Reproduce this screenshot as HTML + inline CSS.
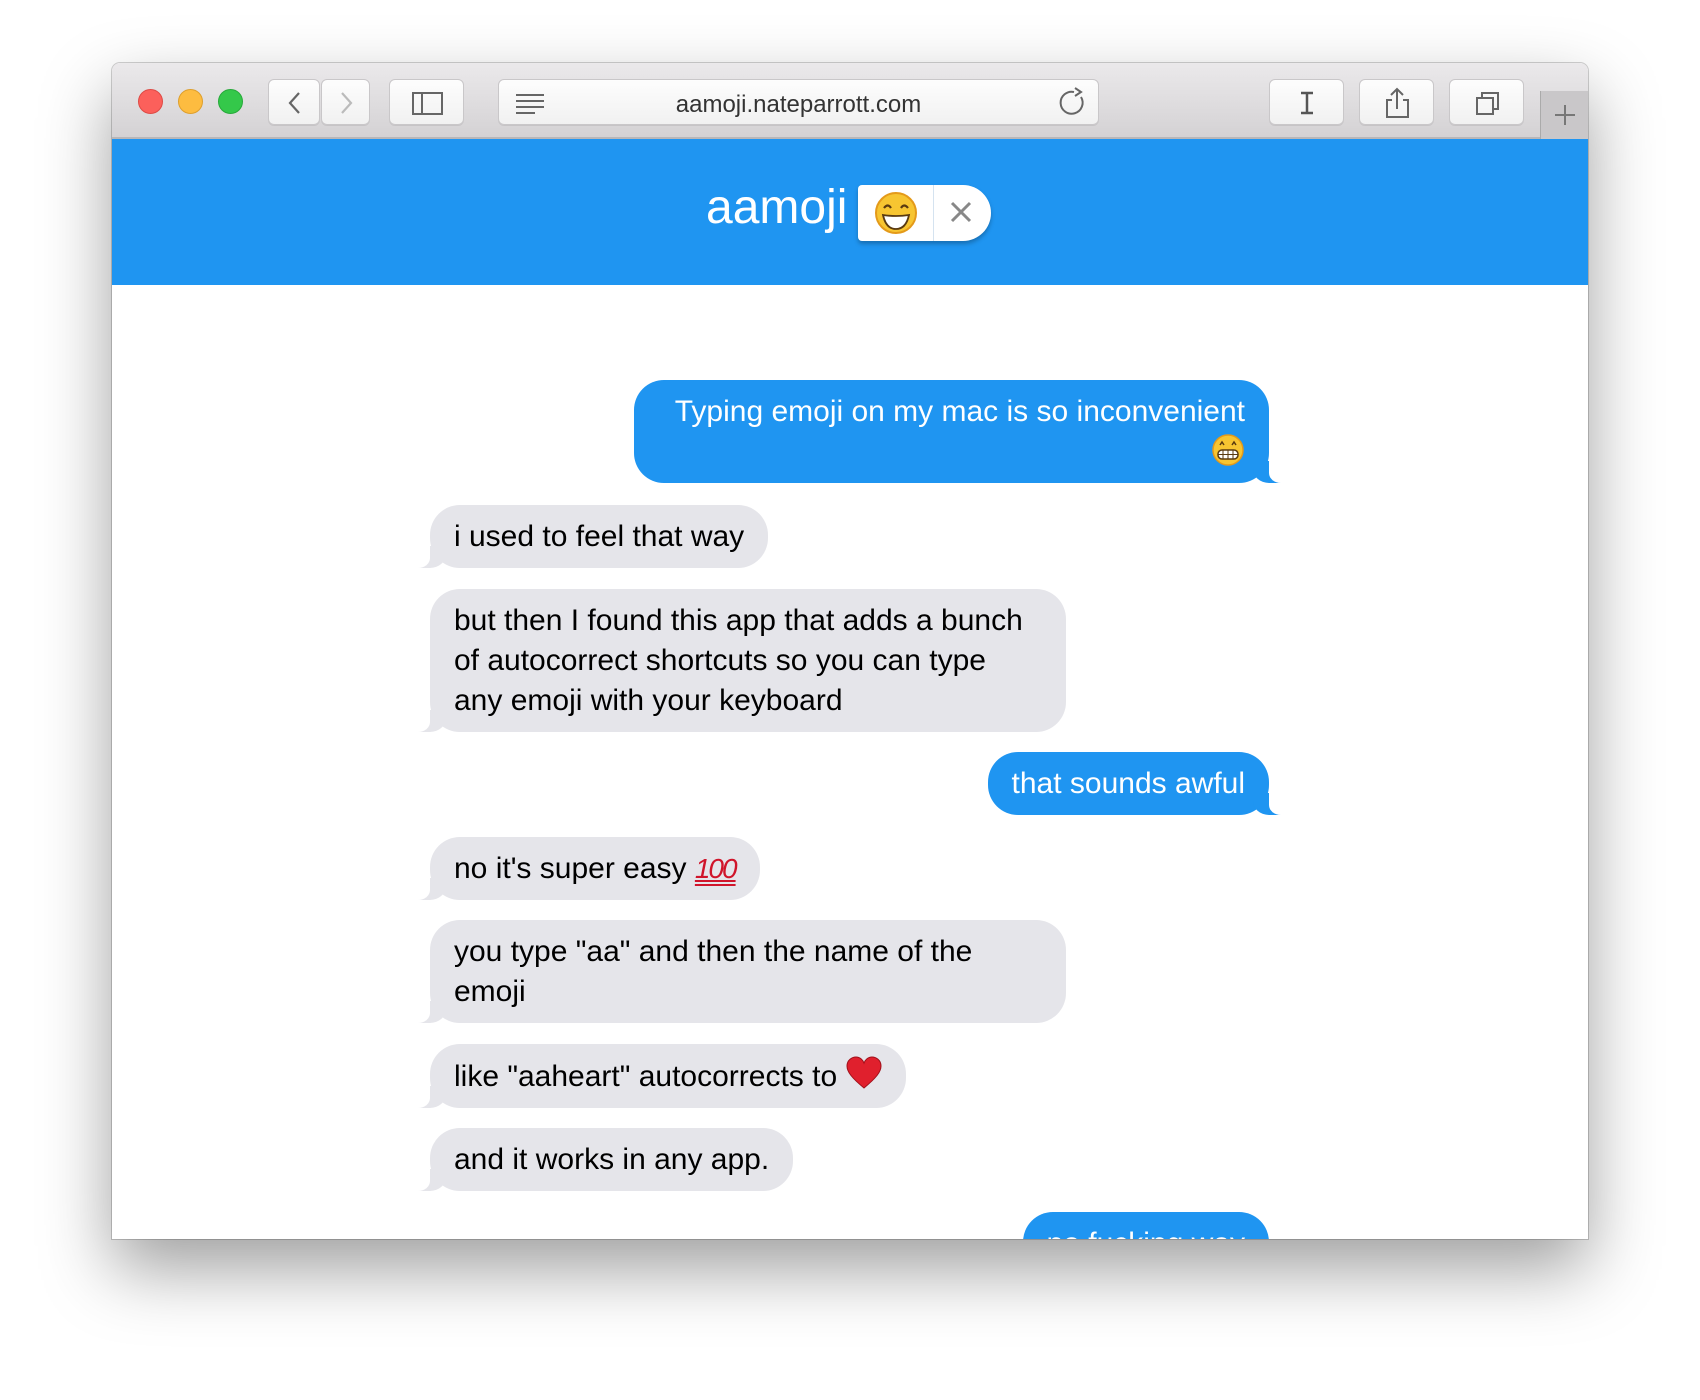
<!DOCTYPE html>
<html><head><meta charset="utf-8"><style>
*{box-sizing:border-box;margin:0;padding:0}
body{width:1700px;height:1400px;background:#fff;font-family:"Liberation Sans",sans-serif;position:relative;overflow:hidden}
.win{position:absolute;left:112px;top:63px;width:1476px;height:1176px;border-radius:8px 8px 0 0;overflow:hidden;box-shadow:0 30px 70px rgba(0,0,0,.38),0 0 0 1px rgba(0,0,0,.18);background:#fff}
.tb{position:absolute;left:0;top:0;width:100%;height:76px;background:linear-gradient(#ebe9eb,#d4d2d4);border-bottom:2px solid #b8b6b8}
.l{position:absolute;top:26px;width:25px;height:25px;border-radius:50%}
.btn{position:absolute;top:16px;height:46px;background:linear-gradient(#fdfdfd,#f1f1f1);border:1px solid #c9c7c9;border-radius:6px;box-shadow:0 1px 0 rgba(0,0,0,.08)}
.hdr{position:absolute;left:0;top:76px;width:100%;height:146px;background:#1f95f1}
.b{position:absolute;font-size:30px;line-height:40px;padding:12px 24px 11px;border-radius:30px}
.g{background:#e5e5ea;color:#000;left:318px}
.u{background:#1f95f1;color:#fff;text-align:right;right:319px}
.g:before{content:"";position:absolute;left:-16px;bottom:0;width:32px;height:22px;background:#e5e5ea;border-bottom-right-radius:16px 14px}
.g:after{content:"";position:absolute;left:-24px;bottom:0;width:24px;height:24px;background:#fff;border-bottom-right-radius:12px 10px}
.u:before{content:"";position:absolute;right:-16px;bottom:0;width:32px;height:22px;background:#1f95f1;border-bottom-left-radius:16px 14px}
.u:after{content:"";position:absolute;right:-24px;bottom:0;width:24px;height:24px;background:#fff;border-bottom-left-radius:12px 10px}
</style></head><body>
<div class="win">
 <div class="tb">
  <div class="l" style="left:26px;background:#fc605b;border:1px solid #de4a45"></div>
  <div class="l" style="left:66px;background:#fdbc40;border:1px solid #de9f2c"></div>
  <div class="l" style="left:106px;background:#34c84a;border:1px solid #27a93a"></div>
  <div class="btn" style="left:156px;width:52px"><svg width="52" height="46"><path d="M30 13 L21 23 L30 33" fill="none" stroke="#666" stroke-width="2.2"/></svg></div>
  <div class="btn" style="left:209px;width:49px"><svg width="49" height="46"><path d="M20 13 L29 23 L20 33" fill="none" stroke="#bbb" stroke-width="2.2"/></svg></div>
  <div class="btn" style="left:277px;width:75px"><svg width="75" height="46"><rect x="23" y="13" width="29" height="21" fill="none" stroke="#666" stroke-width="2"/><line x1="32" y1="13" x2="32" y2="34" stroke="#666" stroke-width="2"/></svg></div>
  <div class="btn" style="left:386px;width:601px"><svg width="60" height="46" style="position:absolute;left:0;top:0"><g stroke="#666" stroke-width="2"><line x1="17" y1="15" x2="45" y2="15"/><line x1="17" y1="21" x2="45" y2="21"/><line x1="17" y1="27" x2="45" y2="27"/><line x1="17" y1="33" x2="36" y2="33"/></g></svg>
   <div style="position:absolute;left:0;right:0;top:11px;text-align:center;font-size:24px;color:#333">aamoji.nateparrott.com</div>
   <svg width="40" height="46" style="position:absolute;right:6px;top:0"><path d="M22 12 A11 11 0 1 0 29 17" fill="none" stroke="#666" stroke-width="2"/><path d="M23 8 L29 12 L23 16" fill="none" stroke="#666" stroke-width="2"/></svg></div>
  <div class="btn" style="left:1157px;width:75px"><svg width="75" height="46"><path d="M31 13 H43 M37 13 V33 M31 33 H43" stroke="#555" stroke-width="2.5" fill="none"/></svg></div>
  <div class="btn" style="left:1247px;width:75px"><svg width="75" height="46"><path d="M32 20 H27 V37 H48 V20 H43 M37 29 V9 M31 15 L37 9 L43 15" stroke="#666" stroke-width="2" fill="none"/></svg></div>
  <div class="btn" style="left:1337px;width:75px"><svg width="75" height="46"><rect x="27" y="18" width="16" height="16" fill="none" stroke="#666" stroke-width="2"/><path d="M32 18 V13 H48 V29 H43" fill="none" stroke="#666" stroke-width="2"/></svg></div>
  <div style="position:absolute;left:1428px;top:28px;width:48px;height:48px;background:#c9c7c9;border-left:1px solid #aaa"><svg width="48" height="48"><path d="M24 14 V34 M14 24 H34" stroke="#777" stroke-width="2"/></svg></div>
 </div>
 <div class="hdr">
  <div style="position:absolute;left:594px;top:41px;font-size:48px;color:#fff;font-weight:300">aamoji</div>
  <div style="position:absolute;left:746px;top:46px;width:133px;height:56px;background:#fff;border-radius:4px 28px 28px 4px;box-shadow:0 3px 4px rgba(0,0,0,.25)">
   <svg width="76" height="56" style="position:absolute;left:0;top:0"><circle cx="38" cy="28" r="20" fill="#f7c531" stroke="#e49a1a" stroke-width="2"/><path d="M26 23 Q30 18 33 23 M43 23 Q46 18 50 23" stroke="#5a3a10" stroke-width="2.2" fill="none"/><path d="M25 30 Q38 32 51 30 Q48 44 38 44 Q28 44 25 30Z" fill="#fff" stroke="#5a3a10" stroke-width="1.8"/></svg>
   <div style="position:absolute;left:75px;top:0;width:1px;height:56px;background:#d5e3f0"></div>
   <svg width="56" height="56" style="position:absolute;left:76px;top:0"><path d="M18 18 L36 36 M36 18 L18 36" stroke="#888" stroke-width="3"/></svg>
  </div>
 </div>
 <div class="b u" style="top:317px;width:635px">Typing emoji on my mac is so inconvenient<br><svg width="34" height="34" style="vertical-align:-6px"><circle cx="17" cy="17" r="15" fill="#f7c531" stroke="#e49a1a" stroke-width="1.5"/><path d="M9 12 L11 9 L13 12 M21 12 L23 9 L25 12" stroke="#5a3a10" stroke-width="1.5" fill="none"/><rect x="7" y="17" width="20" height="9" rx="4" fill="#fff" stroke="#5a3a10" stroke-width="1.5"/><path d="M7 21.5 H27 M12 17 V26 M17 17 V26 M22 17 V26" stroke="#5a3a10" stroke-width="1"/></svg></div>
 <div class="b g" style="top:442px">i used to feel that way</div>
 <div class="b g" style="top:526px;width:636px">but then I found this app that adds a bunch of autocorrect shortcuts so you can type any emoji with your keyboard</div>
 <div class="b u" style="top:689px">that sounds awful</div>
 <div class="b g" style="top:774px">no it's super easy <span style="color:#d0152b;font-style:italic;font-size:28px;text-decoration:underline double;letter-spacing:-2px">100</span></div>
 <div class="b g" style="top:857px;width:636px">you type "aa" and then the name of the emoji</div>
 <div class="b g" style="top:981px">like "aaheart" autocorrects to <svg width="36" height="34" style="vertical-align:-4px"><path d="M18 32 C6 22 1 16 1 10 C1 4 6 1 10 1 C14 1 17 4 18 7 C19 4 22 1 26 1 C30 1 35 4 35 10 C35 16 30 22 18 32Z" fill="#e0202d" stroke="#a0101a" stroke-width="1"/></svg></div>
 <div class="b g" style="top:1065px">and it works in any app.</div>
 <div class="b u" style="top:1149px">no fucking way</div>
</div>
</body></html>
